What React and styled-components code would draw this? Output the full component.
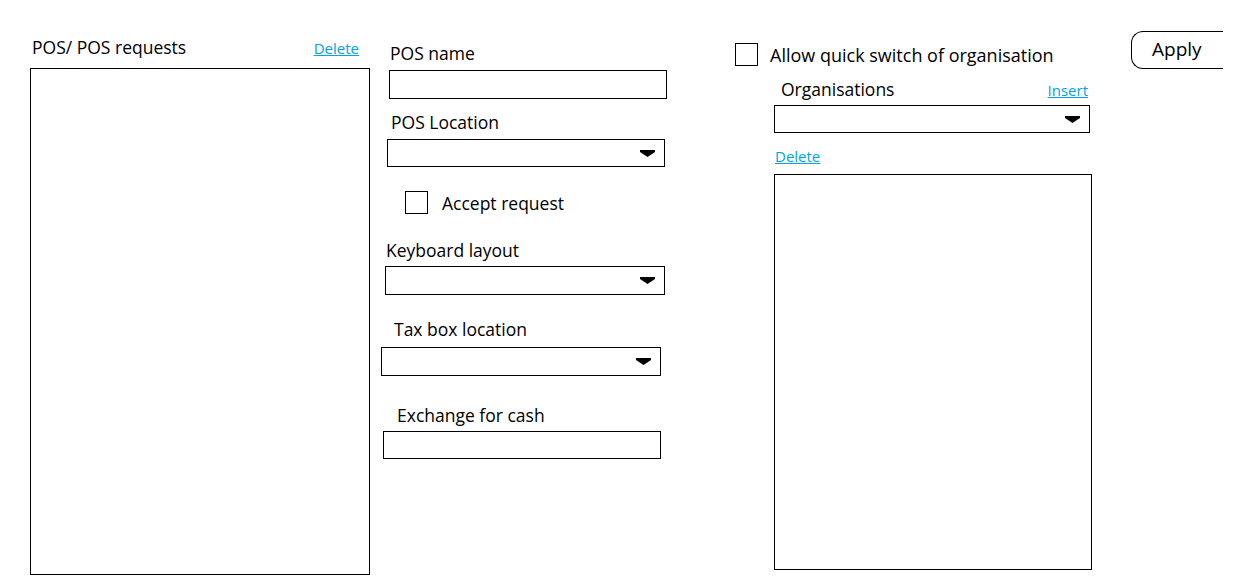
import styled, { createGlobalStyle } from 'styled-components';

const GlobalStyle = createGlobalStyle`
    body {
        margin: 0;
        background: #fff;
        font-family: "Open Sans", "Noto Sans", sans-serif;
        color: #000;
    }
`;

const Page = styled.div`
    display: flex;
    align-items: flex-start;
    padding-left: 30px;
    width: 1244px;
    height: 586px;
    box-sizing: border-box;
    overflow: hidden;
`;

const Column = styled.div`
    display: flex;
    flex-direction: column;
    width: ${p => p.$width}px;
    margin-left: ${p => p.$left || 0}px;
    padding-top: ${p => p.$top || 0}px;
`;

const HeaderRow = styled.div`
    display: flex;
    justify-content: space-between;
    align-items: baseline;
    padding: 0 ${p => p.$right || 0}px 0 ${p => p.$indent || 0}px;
    margin-top: ${p => p.$top || 0}px;
`;

const Label = styled.div`
    font-size: 17.5px;
    line-height: 20px;
    margin-top: ${p => p.$top || 0}px;
    margin-left: ${p => p.$indent || 0}px;
    white-space: nowrap;
`;

const Link = styled.a`
    font-size: 15px;
    line-height: 18px;
    color: #00a2e8;
    text-decoration: underline;
    cursor: pointer;
    margin-top: ${p => p.$top || 0}px;
    margin-left: ${p => p.$indent || 0}px;
    align-self: ${p => p.$self || 'auto'};
`;

const TextBox = styled.div`
    box-sizing: border-box;
    width: ${p => p.$width}px;
    height: ${p => p.$height}px;
    border: 1px solid #000;
    margin-top: ${p => p.$top || 0}px;
    margin-left: ${p => p.$indent || 0}px;
    background: #fff;
`;

const SelectBox = styled(TextBox)`
    display: flex;
    align-items: center;
    justify-content: flex-end;
    padding-right: 9px;
`;

const ListBox = styled(TextBox)``;

const CheckRow = styled.label`
    display: flex;
    align-items: center;
    gap: ${p => p.$gap}px;
    margin-top: ${p => p.$top || 0}px;
    margin-left: ${p => p.$indent || 0}px;
    font-size: ${p => p.$size || 17.5}px;
    line-height: 20px;
    white-space: nowrap;
`;

const Check = styled.input`
    appearance: none;
    margin: 0;
    width: 23px;
    height: 23px;
    border: 1px solid #000;
    background: #fff;
    box-sizing: border-box;
    flex-shrink: 0;
`;

const ApplyButton = styled.button`
    margin: 31px 0 0 38px;
    width: 92px;
    height: 38px;
    box-sizing: border-box;
    border: 1px solid #000;
    border-right: none;
    border-radius: 12px 0 0 12px;
    background: #fff;
    font-family: "Open Sans", "Noto Sans", sans-serif;
    font-size: 19px;
    text-align: left;
    padding: 0 0 3px 20px;
    color: #000;
`;

const Arrow = () => (
    <svg width="15" height="7" viewBox="0 0 15 7">
        <polygon points="0,0 15,0 15,2 7.5,7 0,2" fill="#000" />
    </svg>
);

const Select = (props) => (
    <SelectBox {...props}>
        <Arrow />
    </SelectBox>
);

const App = () => {
    return (
        <>
            <GlobalStyle />
            <Page>
                <Column $width={340} $top={37}>
                    <HeaderRow $indent={2} $right={11}>
                        <Label>POS/ POS requests</Label>
                        <Link>Delete</Link>
                    </HeaderRow>
                    <ListBox $width={340} $height={507} $top={11} />
                </Column>

                <Column $width={286} $left={11} $top={43}>
                    <Label $indent={9}>POS name</Label>
                    <TextBox $width={278} $height={29} $top={7} $indent={8} />

                    <Label $indent={10} $top={13}>POS Location</Label>
                    <Select $width={278} $height={28} $top={7} $indent={6} />

                    <CheckRow $indent={24} $top={24} $gap={14}>
                        <Check type="checkbox" />
                        Accept request
                    </CheckRow>

                    <Label $indent={5} $top={26}>Keyboard layout</Label>
                    <Select $width={280} $height={29} $top={6} $indent={4} />

                    <Label $indent={13} $top={24}>Tax box location</Label>
                    <Select $width={280} $height={29} $top={8} $indent={0} />

                    <Label $indent={16} $top={29}>Exchange for cash</Label>
                    <TextBox $width={278} $height={28} $top={6} $indent={2} />
                </Column>

                <Column $width={358} $left={68} $top={43}>
                    <CheckRow $gap={12} $size={18}>
                        <Check type="checkbox" />
                        Allow quick switch of organisation
                    </CheckRow>

                    <HeaderRow $indent={46} $right={5} $top={13}>
                        <Label>Organisations</Label>
                        <Link>Insert</Link>
                    </HeaderRow>
                    <Select $width={316} $height={28} $top={6} $indent={39} />

                    <Link $indent={40} $top={14} $self="flex-start">Delete</Link>
                    <ListBox $width={318} $height={396} $top={9} $indent={39} />
                </Column>

                <ApplyButton>Apply</ApplyButton>
            </Page>
        </>
    );
};

export default App;
